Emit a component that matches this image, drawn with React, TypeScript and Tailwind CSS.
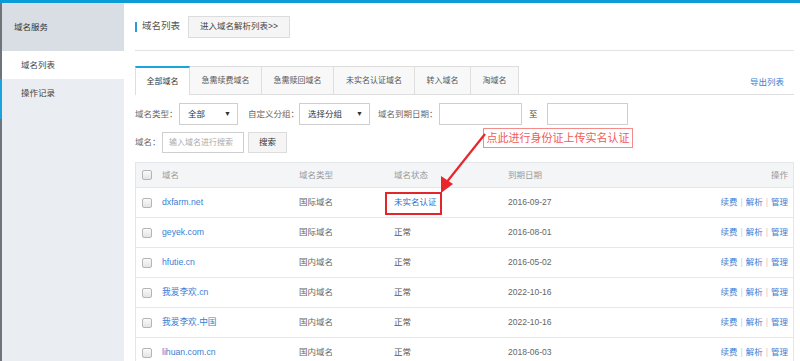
const rows = [
  { name: 'dxfarm.net', type: '国际域名', status: '未实名认证', date: '2016-09-27' },
  { name: 'geyek.com', type: '国际域名', status: '正常', date: '2016-08-01' },
  { name: 'hfutie.cn', type: '国内域名', status: '正常', date: '2016-05-02' },
  { name: '我爱李欢.cn', type: '国内域名', status: '正常', date: '2022-10-16' },
  { name: '我爱李欢.中国', type: '国内域名', status: '正常', date: '2022-10-16' },
  { name: 'lihuan.com.cn', type: '国内域名', status: '正常', date: '2018-06-03' },
];

const tabs = [
  { label: '全部域名', w: 'w-[55px]' },
  { label: '急需续费域名', w: 'w-[72px]' },
  { label: '急需赎回域名', w: 'w-[72px]' },
  { label: '未实名认证域名', w: 'w-[81px]' },
  { label: '转入域名', w: 'w-[56px]' },
  { label: '淘域名', w: 'w-[48px]' },
];

const Checkbox = () => (
  <span className="block w-[10px] h-[10px] rounded-[2px] border border-[#b5b5b5] bg-gradient-to-b from-[#fafafa] to-[#e4e4e4]" />
);

const Select = ({ label, w }: { label: string; w: string }) => (
  <div className={`${w} h-[22px] border border-[#cfcfcf] bg-white flex items-center justify-between pl-[8px] pr-[6px] text-[#333]`}>
    <span>{label}</span>
    <span className="text-[7px]">▼</span>
  </div>
);

export default function App() {
  return (
    <div
      className="relative w-[800px] h-[361px] overflow-hidden bg-white text-[8.5px] text-[#666]"
      style={{ fontFamily: '"Liberation Sans", "Noto Sans CJK SC", sans-serif' }}
    >
      <div className="h-[3px] bg-[#0b9bd7]" />
      <div className="flex h-[358px]">
        {/* sidebar */}
        <div className="w-[124px] shrink-0 flex flex-col bg-[#eaedf1]">
          <div className="h-[48px] shrink-0 bg-[#d9dde4] border-l-2 border-[#6f747c] flex items-center pl-[12px] text-[#333]">
            域名服务
          </div>
          <div className="h-[28px] shrink-0 bg-white border-l-2 border-[#6f747c] flex items-center pl-[19px] text-[#444]">
            域名列表
          </div>
          <div className="h-[40px] shrink-0 border-l-2 border-[#1aa3dc] flex items-start pt-[8px] pl-[19px] text-[#444]">
            操作记录
          </div>
          <div className="flex-1 border-l-2 border-[#6f747c]" />
        </div>

        {/* main */}
        <div className="flex-1 pl-[11px] pr-[6px]">
          <div className="h-[48px] flex items-center border-b border-[#e3e3e3]">
            <div className="w-[2px] h-[10px] bg-[#2a9ad6]" />
            <span className="ml-[5px] text-[9.5px] text-[#555]">域名列表</span>
            <div className="ml-[8px] w-[102px] h-[22px] bg-[#f5f5f5] border border-[#dcdcdc] flex items-center justify-center text-[#444]">
              进入域名解析列表&gt;&gt;
            </div>
          </div>

          <div className="mt-[16px] h-[28px] flex items-end border-b border-[#dedede] text-[8px]">
            {tabs.map((t, i) => (
              <div
                key={t.label}
                className={
                  i === 0
                    ? `${t.w} h-[29px] -mb-px bg-white border-t-2 border-t-[#1aa3dc] border-l border-r border-[#dedede] flex items-center justify-center text-[#333]`
                    : `${t.w} h-[28px] bg-[#f8f8f8] border-t border-r border-[#dedede] flex items-center justify-center text-[#555]`
                }
              >
                {t.label}
              </div>
            ))}
            <div className="flex-1 h-full flex items-center justify-end pr-[10px] pt-[4px] text-[8.5px] text-[#3a7ed3]">导出列表</div>
          </div>

          <div className="mt-[8px] flex items-center h-[22px]">
            <span className="w-[44px]">域名类型：</span>
            <Select label="全部" w="w-[59px]" />
            <span className="ml-[10px] w-[51px]">自定义分组：</span>
            <Select label="选择分组" w="w-[71px]" />
            <span className="ml-[8px] w-[61px] whitespace-nowrap">域名到期日期：</span>
            <div className="w-[83px] h-[22px] border border-[#cfcfcf]" />
            <span className="ml-[7px] text-[#444]">至</span>
            <div className="ml-[9px] w-[81px] h-[22px] border border-[#cfcfcf]" />
          </div>

          <div className="mt-[7px] flex items-center h-[21px]">
            <span className="w-[27px]">域名：</span>
            <div className="w-[82px] h-[21px] border border-[#cfcfcf] flex items-center pl-[6px] text-[8px] text-[#aaa] whitespace-nowrap overflow-hidden">
              输入域名进行搜索
            </div>
            <div className="ml-[4px] w-[39px] h-[21px] bg-[#f5f5f5] border border-[#dcdcdc] flex items-center justify-center text-[#333]">
              搜索
            </div>
          </div>

          {/* table */}
          <div className="mt-[9px] border-l border-r border-t border-[#e3e6ea]">
            <div className="grid grid-cols-[26px_137px_95px_114px_1fr_auto] h-[25px] items-center bg-[#f4f5f7] border-b border-[#e3e6ea] pr-[5px] text-[#999]">
              <div className="pl-[6px]"><Checkbox /></div>
              <div>域名</div>
              <div>域名类型</div>
              <div>域名状态</div>
              <div>到期日期</div>
              <div>操作</div>
            </div>
            {rows.map((r) => (
              <div
                key={r.name + r.date}
                className="grid grid-cols-[26px_137px_95px_114px_1fr_auto] h-[30px] items-center border-b border-[#e8e8e8] pr-[5px]"
              >
                <div className="pl-[6px]"><Checkbox /></div>
                <div className="text-[#3a7ed3] text-[8.7px]">{r.name}</div>
                <div>{r.type}</div>
                <div className={r.status === '正常' ? 'text-[#555]' : 'text-[#2a6fc9]'}>{r.status}</div>
                <div>{r.date}</div>
                <div className="flex items-center gap-[3px] text-[#3a7ed3]">
                  <span>续费</span>
                  <span className="text-[#ccc]">|</span>
                  <span>解析</span>
                  <span className="text-[#ccc]">|</span>
                  <span>管理</span>
                </div>
              </div>
            ))}
          </div>
        </div>
      </div>

      {/* annotation overlay */}
      <div className="absolute left-[483px] top-[128px] w-[150px] h-[20px] border border-[#f58c8c] bg-white flex items-center justify-center text-[11px] text-[#f25a5a] whitespace-nowrap">
        点此进行身份证上传实名认证
      </div>
      <div className="absolute left-[385px] top-[192px] w-[57px] h-[23px] border-2 border-[#e3262b]" />
      <svg className="absolute left-0 top-0" width="800" height="361" viewBox="0 0 800 361">
        <line x1="485" y1="134" x2="446" y2="183" stroke="#e8262b" strokeWidth="2.2" />
        <polygon points="441,193 441,176 453,184" fill="#e8262b" />
      </svg>
    </div>
  );
}
